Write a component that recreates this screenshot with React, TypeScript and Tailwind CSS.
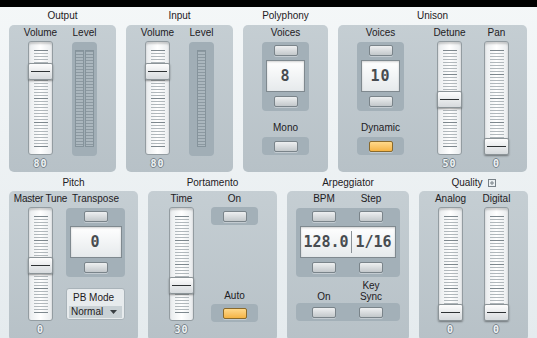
import React from 'react';

const mono = "font-['DejaVu_Sans_Mono','Liberation_Mono',monospace]";

function Ticks() {
  return (
    <svg width="14" height="98" className="block">
      {Array.from({ length: 33 }).map((_, i) => (
        <rect key={i} x="0" y={i * 3} width="14" height="1" fill={i % 8 === 0 ? '#7d878d' : '#b1b8bc'} />
      ))}
    </svg>
  );
}

function Slider({ pos }: { pos: number }) {
  return (
    <div className="relative w-[25px] h-[114px] rounded-[3px] border border-[#939ca1] bg-linear-to-r from-[#e9ecee] via-[#ffffff] to-[#e9ecee] shadow-[inset_0_2px_2px_rgba(0,0,0,0.18)] flex justify-center pt-[8px]">
      <Ticks />
      <div
        className="absolute left-[-1px] w-[25px] h-[17px] rounded-[2px] border border-[#8c9498] bg-linear-to-b from-[#fdfdfd] to-[#d6dadd] shadow-[0_1px_2px_rgba(0,0,0,0.4)] flex items-center justify-center"
        style={{ top: pos }}
      >
        <div className="w-[19px] h-px bg-[#2e3234]" />
      </div>
    </div>
  );
}

function Meter({ bars }: { bars: number }) {
  return (
    <div className="mt-[1px] w-[25px] h-[114px] rounded-[4px] bg-[#a1aeb6] flex justify-center gap-px pt-[8px]">
      {Array.from({ length: bars }).map((_, i) => (
        <div
          key={i}
          className="w-[9px] h-[97px] border border-[#85939b] bg-[repeating-linear-gradient(to_bottom,#8c99a1_0px,#8c99a1_1px,#abb7be_1px,#abb7be_3px)]"
        />
      ))}
    </div>
  );
}

function Value({ children }: { children: React.ReactNode }) {
  return (
    <div
      className={`h-[17px] leading-[18px] whitespace-nowrap ${mono} font-bold text-[10px] tracking-[1px] text-[#eef2f4] [text-shadow:1px_0_0_#7a868d,-1px_0_0_#7a868d,0_1px_0_#7a868d,0_-1px_0_#7a868d]`}
    >
      {children}
    </div>
  );
}

function Label({ children, tight }: { children: React.ReactNode; tight?: boolean }) {
  return (
    <div className={`h-[16px] leading-[16px] whitespace-nowrap text-center ${tight ? 'tracking-[-0.2px]' : ''}`}>
      {children}
    </div>
  );
}

function Btn({ on }: { on?: boolean }) {
  return (
    <div
      className={`w-[24px] h-[11px] rounded-[2px] border shadow-[0_1px_0_rgba(255,255,255,0.35)] ${
        on
          ? 'border-[#8a6a2c] bg-linear-to-b from-[#ffd98a] to-[#f5b443]'
          : 'border-[#7a848a] bg-linear-to-b from-[#eef0f1] to-[#c3c8cb]'
      }`}
    />
  );
}

const digits = `${mono} font-bold text-[15px] text-[#474c50]`;

function Display({ className, children }: { className: string; children: React.ReactNode }) {
  return (
    <div
      className={`${className} h-[32px] border border-[#7f898f] bg-linear-to-b from-[#ffffff] to-[#e6eaec] shadow-[inset_0_1px_2px_rgba(0,0,0,0.18)] flex items-center justify-center tracking-[1px] ${digits}`}
    >
      {children}
    </div>
  );
}

function Stepper({ value, wide }: { value: string; wide?: boolean }) {
  return (
    <div className={`${wide ? 'w-[59px]' : 'w-[47px]'} mt-[1px] h-[69px] rounded-[4px] bg-[#a3b0b8] flex flex-col items-center pt-[3px] gap-[4px]`}>
      <Btn />
      <Display className={wide ? 'w-[52px]' : 'w-[39px]'}>{value}</Display>
      <Btn />
    </div>
  );
}

function Toggle({ on }: { on?: boolean }) {
  return (
    <div className="w-[47px] h-[18px] rounded-[4px] bg-[#a3b0b8] flex items-center justify-center">
      <Btn on={on} />
    </div>
  );
}

function SliderCol({ label, pos, value, className = '', tight }: { label: string; pos: number; value: string; className?: string; tight?: boolean }) {
  return (
    <div className={`w-[25px] flex flex-col items-center ${className}`}>
      <Label tight={tight}>{label}</Label>
      <Slider pos={pos} />
      <Value>{value}</Value>
    </div>
  );
}

function Section({ title, width, bottom, children }: { title: React.ReactNode; width: string; bottom?: boolean; children: React.ReactNode }) {
  return (
    <div className={`${width} flex flex-col`}>
      <div className={bottom ? 'h-[19px] pt-[4px] leading-[14px] flex justify-center gap-[5px]' : 'h-[18px] leading-[18px] flex justify-center'}>
        {title}
      </div>
      <div className={`${bottom ? 'h-[150px]' : 'h-[147px]'} rounded-[5px] bg-linear-to-b from-[#c5ced3] to-[#b7c1c7]`}>{children}</div>
    </div>
  );
}

export default function App() {
  return (
    <div className="w-[537px] h-[338px] overflow-hidden bg-linear-to-b from-[#f4f7f8] to-[#e5ebee] font-['Liberation_Sans',Arial,sans-serif] text-[10px] text-[#1d2023]">
      <div className="h-[7px] bg-black" />

      <div className="flex gap-[10px] pl-[9px]">
        <Section title="Output" width="w-[107px]">
          <div className="flex pl-[19px] gap-[19px]">
            <SliderCol label="Volume" pos={21} value="80" />
            <div className="w-[25px] flex flex-col items-center">
              <Label>Level</Label>
              <Meter bars={2} />
            </div>
          </div>
        </Section>

        <Section title="Input" width="w-[107px]">
          <div className="flex pl-[19px] gap-[19px]">
            <SliderCol label="Volume" pos={21} value="80" />
            <div className="w-[25px] flex flex-col items-center">
              <Label>Level</Label>
              <Meter bars={1} />
            </div>
          </div>
        </Section>

        <Section title="Polyphony" width="w-[85px]">
          <div className="flex flex-col items-center">
            <Label>Voices</Label>
            <Stepper value="8" />
            <div className="mt-[9px]">
              <Label>Mono</Label>
            </div>
            <div className="mt-[1px]">
              <Toggle />
            </div>
          </div>
        </Section>

        <Section title="Unison" width="w-[189px]">
          <div className="flex pl-[19px]">
            <div className="w-[47px] flex flex-col items-center">
              <Label>Voices</Label>
              <Stepper value="10" />
              <div className="mt-[9px]">
                <Label>Dynamic</Label>
              </div>
              <div className="mt-[1px]">
                <Toggle on />
              </div>
            </div>
            <SliderCol label="Detune" pos={49} value="50" className="ml-[33px]" />
            <SliderCol label="Pan" pos={96} value="0" className="ml-[22px]" />
          </div>
        </Section>
      </div>

      <div className="flex gap-[10px] pl-[9px]">
        <Section title="Pitch" width="w-[129px]" bottom>
          <div className="flex pl-[19px]">
            <SliderCol label="Master Tune" pos={49} value="0" tight />
            <div className="w-[59px] ml-[13px] flex flex-col items-center">
              <Label>Transpose</Label>
              <Stepper value="0" wide />
              <div className="mt-[11px] w-[59px] h-[32px] rounded-[3px] border border-[#a9b3b9] bg-[#e7ebed] px-[2px] pt-[3px]">
                <div className="h-[12px] leading-[12px] pl-[4px]">PB Mode</div>
                <div className="mt-[2px] h-[12px] bg-[#c9d1d5] flex items-center justify-between pl-[2px] pr-[5px]">
                  <span className="leading-[12px]">Normal</span>
                  <svg width="7" height="4" viewBox="0 0 7 4" className="block">
                    <path d="M0 0h7L3.5 4z" fill="#3a3f43" />
                  </svg>
                </div>
              </div>
            </div>
          </div>
        </Section>

        <Section title="Portamento" width="w-[129px]" bottom>
          <div className="flex pl-[21px]">
            <SliderCol label="Time" pos={69} value="30" />
            <div className="w-[47px] ml-[17px] flex flex-col items-center">
              <Label>On</Label>
              <Toggle />
              <div className="mt-[63px]">
                <Label>Auto</Label>
              </div>
              <Toggle on />
            </div>
          </div>
        </Section>

        <Section title="Arpeggiator" width="w-[122px]" bottom>
          <div className="flex flex-col pl-[9px]">
            <div className="flex pl-[16px] gap-[23px]">
              <div className="w-[24px] flex justify-center">
                <Label>BPM</Label>
              </div>
              <div className="w-[24px] flex justify-center">
                <Label>Step</Label>
              </div>
            </div>
            <div className="mt-[1px] w-[104px] h-[69px] rounded-[4px] bg-[#a3b0b8] flex flex-col pt-[3px] gap-[4px]">
              <div className="flex pl-[16px] gap-[23px]">
                <Btn />
                <Btn />
              </div>
              <div className="ml-[4px] w-[96px] h-[32px] border border-[#7f898f] bg-linear-to-b from-[#ffffff] to-[#e6eaec] shadow-[inset_0_1px_2px_rgba(0,0,0,0.18)] flex items-center">
                <div className={`w-[50px] flex justify-center ${digits}`}>128.0</div>
                <div className="w-px h-[22px] bg-[#8a9196]" />
                <div className={`flex-1 flex justify-center ${digits}`}>1/16</div>
              </div>
              <div className="flex pl-[16px] gap-[23px]">
                <Btn />
                <Btn />
              </div>
            </div>
            <div className="h-[26px] flex items-end pb-[1px] pl-[16px] gap-[23px]">
              <div className="w-[24px] flex justify-center leading-[11px] whitespace-nowrap">On</div>
              <div className="w-[24px] flex flex-col items-center leading-[11px] whitespace-nowrap">
                <span>Key</span>
                <span>Sync</span>
              </div>
            </div>
            <div className="w-[104px] h-[18px] rounded-[4px] bg-[#a3b0b8] flex items-center pl-[16px] gap-[23px]">
              <Btn />
              <Btn />
            </div>
          </div>
        </Section>

        <Section
          title={
            <>
              <span>Quality</span>
              <svg width="8" height="8" viewBox="0 0 8 8" className="block mt-[3px]">
                <rect x="0.5" y="0.5" width="7" height="7" fill="none" stroke="#788187" />
                <path d="M4 2v4M2 4h4" stroke="#788187" />
              </svg>
            </>
          }
          width="w-[109px]"
          bottom
        >
          <div className="flex pl-[19px] gap-[21px]">
            <SliderCol label="Analog" pos={96} value="0" />
            <SliderCol label="Digital" pos={96} value="0" />
          </div>
        </Section>
      </div>
    </div>
  );
}
